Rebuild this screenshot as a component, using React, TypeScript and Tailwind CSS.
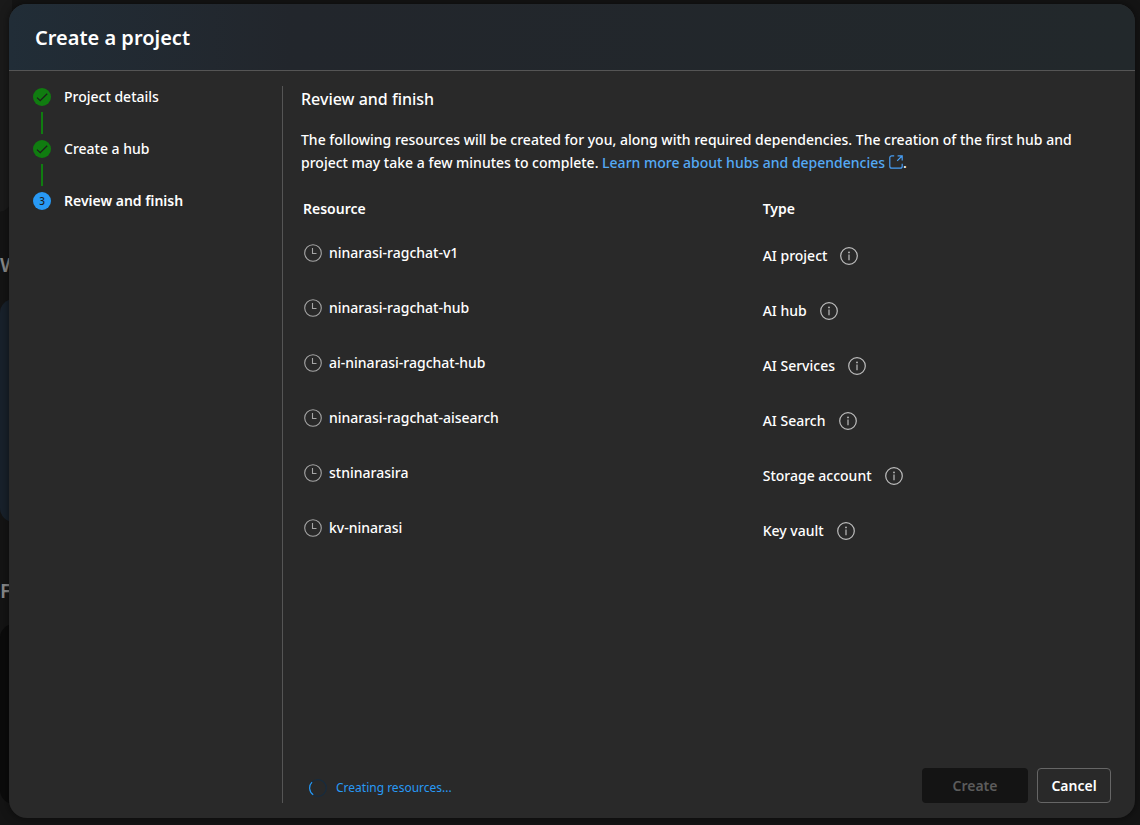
import type { ReactNode } from "react";

const resources = [
  { name: "ninarasi-ragchat-v1", type: "AI project" },
  { name: "ninarasi-ragchat-hub", type: "AI hub" },
  { name: "ai-ninarasi-ragchat-hub", type: "AI Services" },
  { name: "ninarasi-ragchat-aisearch", type: "AI Search" },
  { name: "stninarasira", type: "Storage account" },
  { name: "kv-ninarasi", type: "Key vault" },
];

function CheckBadge() {
  return (
    <svg className="size-[18px]" viewBox="0 0 18 18" aria-hidden="true">
      <circle cx="9" cy="9" r="9" fill="#107c10" />
      <path d="M4 9.6 7.2 12.6 14.2 5.8" fill="none" stroke="#1b1f1b" strokeWidth="1.3" />
    </svg>
  );
}

function ClockIcon() {
  return (
    <svg className="size-[18px] shrink-0" viewBox="0 0 18 18" fill="none" stroke="#a6a6a6" strokeWidth="1.1" aria-hidden="true">
      <circle cx="9" cy="9" r="8.3" />
      <path d="M8.5 4v5.5H12.5" />
    </svg>
  );
}

function InfoIcon() {
  return (
    <svg className="size-[18px]" viewBox="0 0 18 18" fill="none" aria-hidden="true">
      <circle cx="9" cy="9" r="8.3" stroke="#bdbdbd" strokeWidth="1.2" />
      <path d="M9 7.6v5.6" stroke="#bdbdbd" strokeWidth="1.2" />
      <circle cx="9" cy="5.4" r="0.9" fill="#bdbdbd" />
    </svg>
  );
}

function OpenIcon() {
  return (
    <svg className="ml-1 inline size-[14px] align-[-1px]" viewBox="0 0 14 14" fill="none" stroke="#479ef5" strokeWidth="1.2" aria-hidden="true">
      <path d="M5.2.8H2.8a2 2 0 0 0-2 2v8.4a2 2 0 0 0 2 2h8.4a2 2 0 0 0 2-2V8.8M8.6.8h4.6v4.6M13 1 8.2 5.8" />
    </svg>
  );
}

function Step({ badge, connector, children }: { badge: ReactNode; connector?: boolean; children: ReactNode }) {
  return (
    <li className="flex gap-[13px]">
      <div className="flex w-[18px] flex-col items-center">
        {badge}
        {connector && <span className="my-[6px] h-[22px] w-[2px] bg-[#107c10]" />}
      </div>
      <span className="text-sm leading-[18px]">{children}</span>
    </li>
  );
}

function Backdrop() {
  return (
    <div className="absolute inset-0 -z-10 overflow-hidden bg-[#141414] font-semibold text-[#8a8a8a]" aria-hidden="true">
      <div className="absolute -top-10 -left-10 h-[252px] w-[52px] rounded-[14px] bg-[#1a1a1a]" />
      <div className="absolute top-[251px] left-0 text-[20px] leading-7">W</div>
      <div className="absolute top-[299px] left-0 h-[223px] w-10 rounded-l-[14px] bg-[#18212b]" />
      <div className="absolute top-[577px] left-0 text-[20px] leading-7">F</div>
      <div className="absolute top-[624px] left-0 h-[180px] w-10 rounded-l-[14px] bg-[#0b0b0b]" />
    </div>
  );
}

export default function App() {
  return (
    <div className="relative isolate flex min-h-screen pt-1 pr-[5px] pb-[7px] pl-[9px] font-['Noto_Sans','Open_Sans',sans-serif] font-medium text-white">
      <Backdrop />
      <section role="dialog" aria-labelledby="dialog-title" className="flex flex-1 flex-col overflow-hidden rounded-[18px] bg-[#292929] shadow-[0_0_8px_#0008]">
        <header className="flex h-[67px] items-center border-b border-[#555] bg-linear-to-r from-[#212d37] via-[#22262c] via-25% to-[#22282b] px-[26px] pt-[2px]">
          <h1 id="dialog-title" className="text-[20px] font-semibold">Create a project</h1>
        </header>
        <div className="flex flex-1 pt-[15px] pb-[15px]">
          <nav className="w-[274px] shrink-0 border-r border-[#555] pt-[2px] pl-6" aria-label="Steps">
            <ol>
              <Step connector badge={<CheckBadge />}>Project details</Step>
              <Step connector badge={<CheckBadge />}>Create a hub</Step>
              <Step badge={<span className="flex size-[18px] items-center justify-center rounded-full bg-[#2899f5] text-[10px] leading-none text-[#1b1b1b]">3</span>}>
                <span className="font-semibold">Review and finish</span>
              </Step>
            </ol>
          </nav>
          <main className="flex flex-1 flex-col pr-6 pl-[18px]">
            <h2 className="text-base leading-[26px]">Review and finish</h2>
            <p className="mt-4 pr-3 text-sm leading-[23px]">
              The following resources will be created for you, along with required dependencies. The creation of the first hub and project may take a few minutes to complete.{" "}
              <a href="#learn" className="text-[#55aaf5]">Learn more about hubs and dependencies<OpenIcon /></a>.
            </p>
            <table className="mt-4 w-full table-fixed text-left text-sm">
              <thead>
                <tr className="h-[38px]">
                  <th scope="col" className="w-[57%] pl-[2px] font-semibold">Resource</th>
                  <th scope="col" className="font-semibold">Type</th>
                </tr>
              </thead>
              <tbody>
                {resources.map((r) => (
                  <tr key={r.name} className="h-[55px]">
                    <td className="pb-[6px] pl-[3px]">
                      <span className="flex items-center gap-[7px]"><ClockIcon />{r.name}</span>
                    </td>
                    <td>
                      <span className="flex items-center gap-[13px]">
                        {r.type}
                        <button type="button" aria-label={`About ${r.type}`}><InfoIcon /></button>
                      </span>
                    </td>
                  </tr>
                ))}
              </tbody>
            </table>
            <footer className="mt-auto flex items-center justify-between">
              <div role="status" className="flex items-center gap-[9px] pt-[5px] pl-2 text-xs font-normal text-[#2899f5]">
                <svg className="size-[18px]" viewBox="0 0 18 18" fill="none" aria-hidden="true">
                  <circle cx="9" cy="9" r="8.3" stroke="#162c40" strokeWidth="1.2" />
                  <path d="M3 3.2A8.3 8.3 0 0 0 4.200 15.800" stroke="#2899f5" strokeWidth="1.2" />
                </svg>
                Creating resources...
              </div>
              <div className="flex gap-[9px]">
                <button type="button" disabled className="h-[35px] w-[106px] rounded bg-[#141414] text-sm font-semibold text-[#5c5c5c]">Create</button>
                <button type="button" className="h-[35px] w-[74px] rounded border border-[#666] text-sm font-semibold">Cancel</button>
              </div>
            </footer>
          </main>
        </div>
      </section>
    </div>
  );
}
